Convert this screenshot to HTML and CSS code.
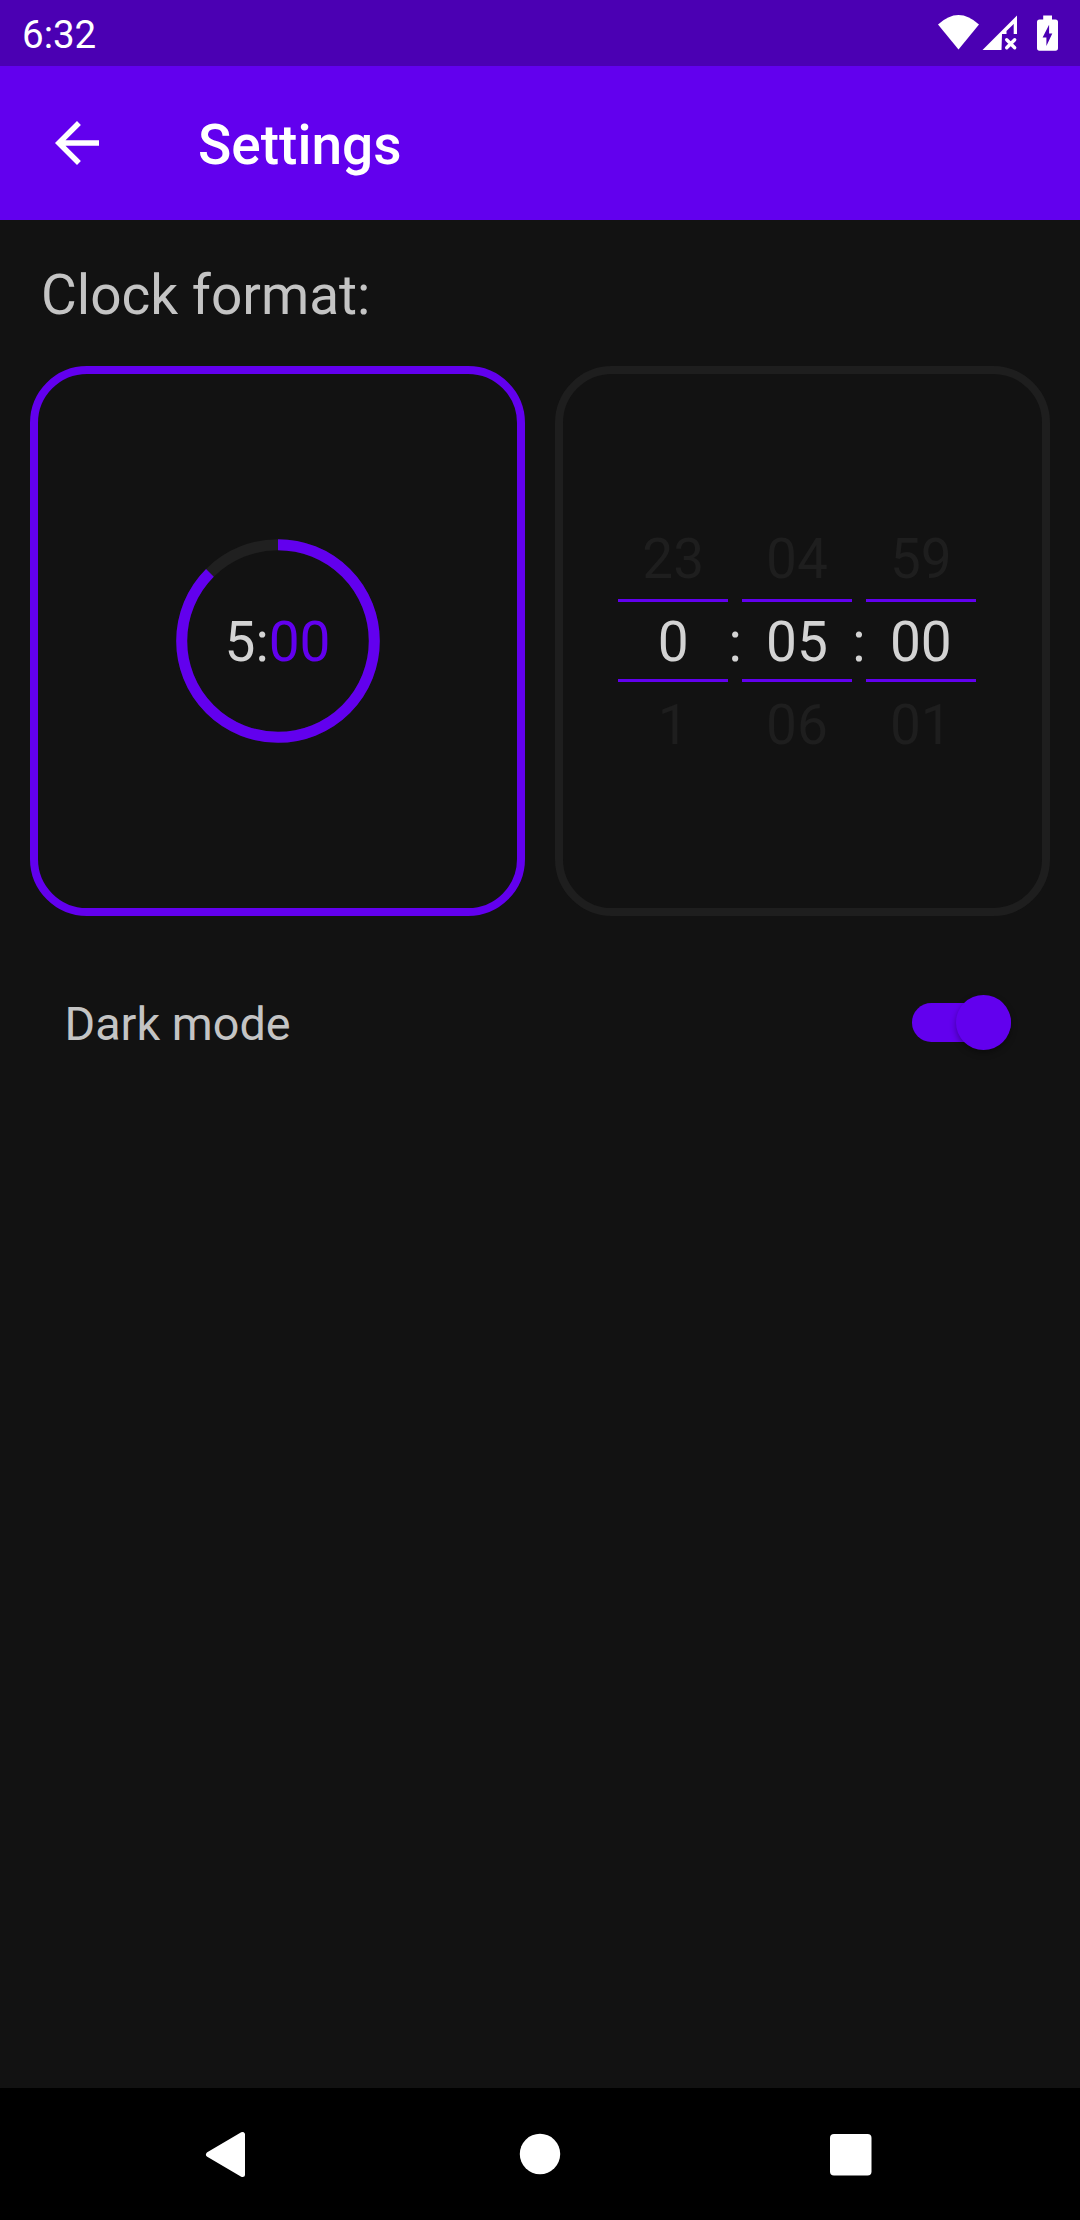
FILE: index.html
```html
<!DOCTYPE html>
<html lang="en">
<head>
<meta charset="utf-8">
<title>Settings</title>
<link rel="stylesheet" href="styles.css">
</head>
<body>
<div class="screen">
  <div class="status-bar">
    <span class="status-time">6:32</span>
    <svg class="status-icons" width="124" height="40" viewBox="0 0 124 40" fill="#fff">
      <path d="M0 9.500Q20.500 -9.500 41 9.500L20.500 34.500Z"/>
      <path fill-rule="evenodd" d="M44.500 35L79 0.500V19H75.700V9L68.500 16V19H64L63.500 35Z"/>
      <path d="M68.700 24.700L76.700 32.700M76.700 24.700L68.700 32.700" stroke="#fff" stroke-width="3.400" stroke-linecap="round"/>
      <path fill-rule="evenodd" d="M105.200 0.500H114V4.500H117.500Q120 4.500 120 7V33Q120 35.700 117.500 35.700H101.500Q99 35.700 99 33V7Q99 4.500 101.500 4.500H105.200ZM111.100 9.700L104.600 22.500H108.400V31L114.300 18.500H111.100Z"/>
    </svg>
  </div>
  <header class="app-bar">
    <svg class="back" width="44" height="44" viewBox="4 4 16 16" fill="#fff"><path d="M20 11H7.830l5.590-5.590L12 4l-8 8 8 8 1.410-1.410L7.830 13H20v-2z"/></svg>
    <h1 class="title">Settings</h1>
  </header>
  <main class="content">
    <h2 class="section-title">Clock format:</h2>
    <div class="formats">
      <div class="card card-selected">
        <div class="dial">
          <svg class="ring" viewBox="0 0 204 204" fill="none" stroke-width="11">
            <circle cx="102" cy="102" r="96.300" stroke="#202020"/>
            <circle cx="102" cy="102" r="96.300" stroke="#6200ee" pathLength="360" stroke-dasharray="315 45" transform="rotate(-90 102 102)"/>
          </svg>
          <div class="dial-time">5:<span class="seconds">00</span></div>
        </div>
      </div>
      <div class="card">
        <div class="picker">
          <div class="wheel"><span class="near">23</span><span class="current">0</span><span class="near">1</span></div>
          <span class="colon">:</span>
          <div class="wheel"><span class="near">04</span><span class="current">05</span><span class="near">06</span></div>
          <span class="colon">:</span>
          <div class="wheel"><span class="near">59</span><span class="current">00</span><span class="near">01</span></div>
        </div>
      </div>
    </div>
    <div class="setting-row">
      <span class="setting-label">Dark mode</span>
      <div class="switch"><div class="thumb"></div></div>
    </div>
  </main>
  <nav class="nav-bar">
    <svg class="nav-icons" width="1080" height="132" viewBox="0 0 1080 132" fill="#fff">
      <path d="M208.500 66.500L242.500 46.500V86.500Z" stroke="#fff" stroke-width="5" stroke-linejoin="round"/>
      <circle cx="540" cy="66" r="20.200"/>
      <rect x="830" y="46" width="41.500" height="41.500" rx="4"/>
    </svg>
  </nav>
</div>
</body>
</html>
```
FILE: styles.css
```css
body {
  margin: 0;
  background: #121212;
  font-family: Roboto, "Noto Sans", sans-serif;
}

.screen {
  display: flex;
  flex-direction: column;
  width: 1080px;
  height: 2220px;
  overflow: hidden;
}

.status-bar {
  display: flex;
  justify-content: space-between;
  height: 66px;
  padding: 0 18px 0 22px;
  background: #4b00b3;
  color: #fff;
}

.status-time {
  font-size: 38.5px;
  line-height: 70px;
}

.status-icons {
  margin-top: 15px;
}

.app-bar {
  display: flex;
  align-items: center;
  gap: 99px;
  height: 154px;
  padding-left: 55px;
  background: #6200ee;
  color: #fff;
}

.back {
  margin-bottom: 1px;
}

.title {
  margin: 0;
  font-size: 55px;
  font-weight: 500;
  line-height: 64px;
  padding-top: 4px;
}

.content {
  flex: 1;
}

.section-title {
  margin: 43px 0 0 41px;
  font-size: 55px;
  font-weight: 400;
  line-height: 64px;
  color: #c4c4c4;
}

.formats {
  display: grid;
  grid-template-columns: 495px 495px;
  gap: 30px;
  margin: 38.7px 30px 0;
}

.card {
  display: flex;
  align-items: center;
  justify-content: center;
  box-sizing: border-box;
  height: 550px;
  border: 8px solid #1e1e1e;
  border-radius: 57px;
}

.card-selected {
  border-color: #6200ee;
}

.dial {
  display: grid;
  place-items: center;
}

.ring,
.dial-time {
  grid-area: 1 / 1;
}

.ring {
  width: 204px;
  height: 204px;
}

.dial-time {
  padding-top: 2px;
  font-size: 55px;
  line-height: 64px;
  color: #d3d3d3;
}

.seconds {
  color: #6200ee;
}

.picker {
  display: flex;
  align-items: center;
  margin-right: 11px;
  font-size: 55px;
  text-align: center;
}

.wheel {
  display: flex;
  flex-direction: column;
  width: 110px;
}

.near {
  height: 83px;
  line-height: 87px;
  color: #1e1e1e;
}

.current {
  box-sizing: border-box;
  height: 83px;
  line-height: 81px;
  border-top: 3px solid #6200ee;
  border-bottom: 3px solid #6200ee;
  color: #d3d3d3;
}

.colon {
  width: 13.8px;
  padding-top: 4px;
  line-height: 83px;
  color: #d3d3d3;
}

.setting-row {
  display: flex;
  align-items: center;
  justify-content: space-between;
  height: 110px;
  margin-top: 52px;
  padding: 0 69px 0 64.5px;
}

.setting-label {
  padding-top: 2px;
  font-size: 46.75px;
  color: #c4c4c4;
}

.switch {
  display: flex;
  align-items: center;
  justify-content: flex-end;
  width: 99px;
  height: 38.5px;
  border-radius: 19.25px;
  background: #6200ee;
}

.thumb {
  width: 55.5px;
  height: 55.5px;
  flex: none;
  border-radius: 50%;
  background: #6200ee;
  box-shadow: 0 3px 6px rgba(0, 0, 0, 0.35);
}

.nav-bar {
  height: 132px;
  background: #000;
}

.nav-icons {
  display: block;
}
```
